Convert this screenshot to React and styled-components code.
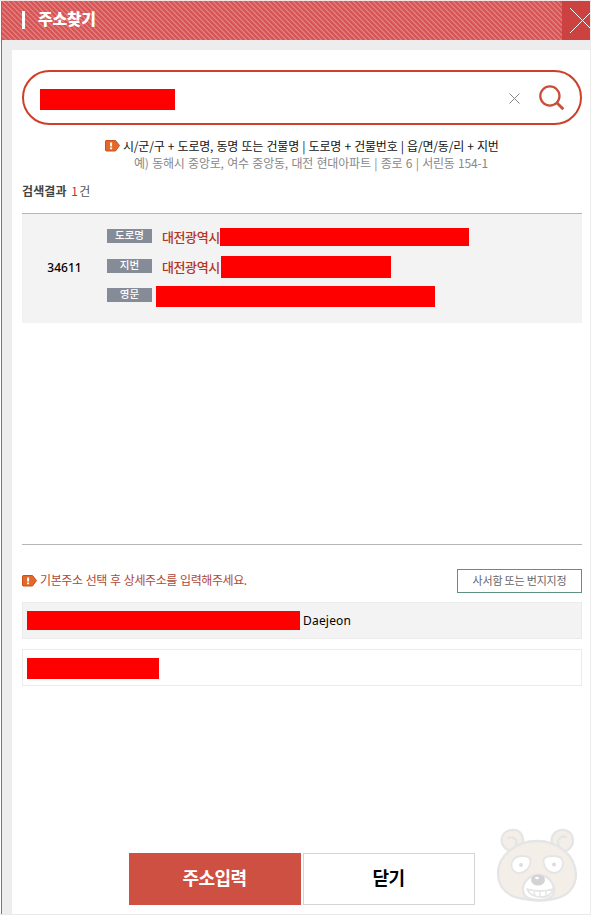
import React from "react";
import styled, { createGlobalStyle } from "styled-components";

const GlobalStyle = createGlobalStyle`
  * { box-sizing: border-box; }
  body { margin: 0; background: #fff; }
`;

const Window = styled.div`
  width: 591px;
  height: 915px;
  padding-left: 1px;
  border-top: 1px solid #f4e4e4;
  border-right: 1px solid #ececec;
  border-bottom: 1px solid #e9e9e9;
  background: #fff;
  font-family: "Noto Sans CJK KR", sans-serif;
  color: #000;
  overflow: hidden;
`;

const Frame = styled.div`
  height: 100%;
  border-left: 1px solid #777;
  display: flex;
  flex-direction: column;
`;

const Header = styled.header`
  height: 39px;
  flex: none;
  display: flex;
  align-items: stretch;
  background: repeating-linear-gradient(45deg, #d85556 0 2.75px, #e17b7b 2.75px 3.536px);
`;

const TitleBar = styled.i`
  width: 3px;
  height: 18px;
  margin: 10px 13px 0 20px;
  background: #fff;
`;

const Title = styled.h1`
  margin: 0;
  flex: 1;
  font-size: 16px;
  line-height: 35px;
  font-weight: 900;
  letter-spacing: -0.3px;
  color: #fff;
`;

const CloseButton = styled.button`
  width: 28px;
  padding: 0;
  border: 0;
  background: #cb4240;
  overflow: hidden;
  svg { display: block; }
`;

const Body = styled.div`
  flex: 1;
  min-height: 0;
  padding: 10px 0 0 10px;
  background: #ededed;
`;

const Panel = styled.main`
  height: 100%;
  padding: 20px 8px 0 10px;
  background: #fff;
  position: relative;
  display: flex;
  flex-direction: column;
`;

const SearchBox = styled.div`
  height: 55px;
  flex: none;
  border: 2px solid #cd3f27;
  border-radius: 28px;
  display: flex;
  align-items: center;
  padding: 0 15px 0 16px;
`;

const Redaction = styled.span`
  display: block;
  flex: none;
  width: ${(p) => p.$w}px;
  height: ${(p) => p.$h}px;
  margin-top: ${(p) => p.$top || 0}px;
  margin-left: ${(p) => p.$left || 0}px;
  background: #f00;
`;

const ClearIcon = styled.svg`
  margin: 1px 19px 0 auto;
`;

const Hints = styled.div`
  margin-top: 12px;
  height: 36px;
  font-size: 12px;
  line-height: 17px;
  white-space: nowrap;
`;

const HintLine = styled.p`
  margin: 0;
  display: flex;
  align-items: center;
  padding-left: ${(p) => p.$indent}px;
  letter-spacing: -0.2px;
  word-spacing: ${(p) => p.$gap}px;
  color: ${(p) => p.$color};
`;

const NoticeIcon = styled.svg`
  flex: none;
  margin-right: 3px;
`;

const ResultCount = styled.p`
  margin: 9px 0 0;
  height: 31px;
  font-size: 12px;
  line-height: 17px;
  letter-spacing: 0.1px;
  word-spacing: 2px;
  color: #555;
  b { color: #444; }
  em { font-style: normal; color: #c22f3c; margin-right: 1px; }
`;

const Results = styled.section`
  height: 332px;
  flex: none;
  border-top: 1px solid #b5b5b5;
  border-bottom: 1px solid #b5b5b5;
`;

const ResultRow = styled.div`
  height: 109px;
  background: #f3f3f3;
  display: flex;
`;

const Zip = styled.div`
  width: 85px;
  line-height: 107px;
  text-align: center;
  font-family: "Noto Sans", sans-serif;
  font-weight: 500;
  font-size: 12px;
`;

const AddressList = styled.div`
  padding-top: 8px;
`;

const AddressRow = styled.div`
  height: 30px;
  display: flex;
  align-items: center;
  &:last-child { margin-top: -1px; }
`;

const Tag = styled.span`
  width: 45px;
  height: 14px;
  margin-top: -3px;
  background: #858c98;
  color: #fff;
  font-size: 10.5px;
  font-weight: 500;
  line-height: 12px;
  text-align: center;
`;

const City = styled.strong`
  width: 58px;
  margin-left: 10px;
  font-size: 13px;
  line-height: 20px;
  letter-spacing: -0.4px;
  font-weight: 500;
  white-space: nowrap;
  color: #b53522;
`;

const NoticeRow = styled.div`
  margin-top: 24px;
  height: 24px;
  display: flex;
  align-items: center;
`;

const Notice = styled.span`
  flex: 1;
  margin-top: -2px;
  font-size: 12px;
  line-height: 18px;
  letter-spacing: -0.4px;
  word-spacing: 0.8px;
  color: #b04838;
`;

const OutlineButton = styled.button`
  width: 125px;
  height: 24px;
  padding: 0 0 2px;
  border: 1px solid #5f927e;
  background: #fff;
  font: 11px/20px "Noto Sans CJK KR", sans-serif;
  letter-spacing: -0.2px;
  color: #666;
`;

const Field = styled.div`
  height: 37px;
  flex: none;
  margin-top: ${(p) => p.$gap}px;
  border: 1px solid #ebebeb;
  background: ${(p) => (p.$filled ? "#f3f3f3" : "#fff")};
  display: flex;
  align-items: center;
  padding-left: 4px;
  font-family: "Noto Sans", sans-serif;
  font-size: 12px;
  letter-spacing: 0.2px;
  gap: 3px;
`;

const Actions = styled.div`
  margin: 167px 0 0 107px;
  display: flex;
  gap: 2px;
`;

const ActionButton = styled.button`
  width: 172px;
  height: 52px;
  padding: 0 1px 4px 0;
  border: 1px solid ${(p) => (p.$primary ? "#ce5043" : "#d5d5d5")};
  background: ${(p) => (p.$primary ? "#ce5043" : "#fff")};
  color: ${(p) => (p.$primary ? "#fff" : "#000")};
  font: 700 18px/46px "Noto Sans CJK KR", sans-serif;
  letter-spacing: -0.6px;
`;

const Mascot = styled.svg`
  position: absolute;
  left: 484px;
  top: 778px;
`;

const NoticeMark = () => (
  <NoticeIcon width="15" height="12" viewBox="0 0 15 12">
    <path d="M1 .5h9.5L14.5 5.5 10.5 11H1L.5 10.500V1Z" fill="#e3682a" stroke="#c8511c" />
    <path d="M5.100 2.500h2v4h-2zM5.100 7.500h2v1.700h-2z" fill="#fff" />
  </NoticeIcon>
);

const Bear = () => (
  <Mascot width="84" height="76" viewBox="0 0 84 76" fill="none" stroke="#e5e5e5" strokeWidth="2.300" strokeLinecap="round" strokeLinejoin="round">
    <path d="M14 23C2 19 3 3 16 2C24 1 28 8 27 15M56 15C54 7 61 1 68 2C79 4 80 18 70 23" fill="#f4eee8" />
    <path d="M12 10C18 8 22 12 20 17M63 17C60 12 65 7 70 9" />
    <path d="M41 13C20 13 2 28 2 45C2 61 13 69 28 71Q42 74 57 71C71 69 80 60 80 46C79 27 62 13 41 13Z" fill="#f4eee8" />
    <path d="M26 28C19 28 15 33 15.500 38C16 43 20 45.500 24 45C30 44.500 34 39 34.500 34C35 29 31 28 26 28ZM58 28C51 28 47 29 47.500 34C48 40 53 45 58 45C64 45 67 40 67 35C67 30 64 28 58 28Z" fill="#fff" strokeWidth="1.800" />
    <path d="M42 47C33 47 26 55 27 63C28 70 35 72 43 72C53 72 59 68 58 61C57 53 51 47 42 47Z" fill="#fff" />
    <path d="M31 61Q44 65 57 61Q55 69 46 69Q34 69 31 61Z" fill="#fff" strokeWidth="1.800" />
    <path d="M38 63.500l1 4M44 64v4.500M50 63.500v4" strokeWidth="1.400" />
    <ellipse cx="42" cy="52" rx="7" ry="5.500" fill="#d3d3d3" stroke="none" />
    <ellipse cx="41" cy="50" rx="2" ry="1.300" fill="#fff" stroke="none" />
    <circle cx="25" cy="37" r="1.900" fill="#dcdcdc" stroke="none" />
    <circle cx="58" cy="36.500" r="1.900" fill="#dcdcdc" stroke="none" />
  </Mascot>
);

export default function App() {
  return (
    <>
      <GlobalStyle />
      <Window>
        <Frame>
          <Header>
            <TitleBar />
            <Title>주소찾기</Title>
            <CloseButton aria-label="닫기">
              <svg width="28" height="39" viewBox="0 0 28 39" stroke="#fff" strokeWidth="1">
                <path d="M8 7L33 32M8 32L33 7" />
              </svg>
            </CloseButton>
          </Header>
          <Body>
            <Panel>
              <SearchBox>
                <Redaction $w={135} $h={21} $top={4} />
                <ClearIcon width="11" height="11" viewBox="0 0 11 11" stroke="#888" strokeWidth="1">
                  <path d="M.5.5l10 10M10.500.5l-10 10" />
                </ClearIcon>
                <svg width="26" height="27" viewBox="0 0 26 27" fill="none" stroke="#c94d38" strokeWidth="2.300">
                  <circle cx="10.900" cy="12" r="9.600" />
                  <path d="M17.800 18.800l6.500 6.500" strokeWidth="2.800" />
                </svg>
              </SearchBox>
              <Hints>
                <HintLine $indent={83} $gap={0.8} $color="#111">
                  <NoticeMark />
                  시/군/구 + 도로명, 동명 또는 건물명 | 도로명 + 건물번호 | 읍/면/동/리 + 지번
                </HintLine>
                <HintLine $indent={112} $gap={0.95} $color="#888">
                  예) 동해시 중앙로, 여수 중앙동, 대전 현대아파트 | 종로 6 | 서린동 154-1
                </HintLine>
              </Hints>
              <ResultCount>
                <b>검색결과</b> <em>1</em>건
              </ResultCount>
              <Results>
                <ResultRow>
                  <Zip>34611</Zip>
                  <AddressList>
                    <AddressRow>
                      <Tag>도로명</Tag>
                      <City>대전광역시</City>
                      <Redaction $w={249} $h={18} />
                    </AddressRow>
                    <AddressRow>
                      <Tag>지번</Tag>
                      <City>대전광역시</City>
                      <Redaction $w={170} $h={22} $left={1} />
                    </AddressRow>
                    <AddressRow>
                      <Tag>영문</Tag>
                      <Redaction $w={279} $h={21} $left={4} />
                    </AddressRow>
                  </AddressList>
                </ResultRow>
              </Results>
              <NoticeRow>
                <NoticeMark />
                <Notice>기본주소 선택 후 상세주소를 입력해주세요.</Notice>
                <OutlineButton>사서함 또는 번지지정</OutlineButton>
              </NoticeRow>
              <Field $gap={9} $filled>
                <Redaction $w={273} $h={19} />
                Daejeon
              </Field>
              <Field $gap={10}>
                <Redaction $w={132} $h={21} $top={2} />
              </Field>
              <Actions>
                <ActionButton $primary>주소입력</ActionButton>
                <ActionButton>닫기</ActionButton>
              </Actions>
              <Bear />
            </Panel>
          </Body>
        </Frame>
      </Window>
    </>
  );
}
